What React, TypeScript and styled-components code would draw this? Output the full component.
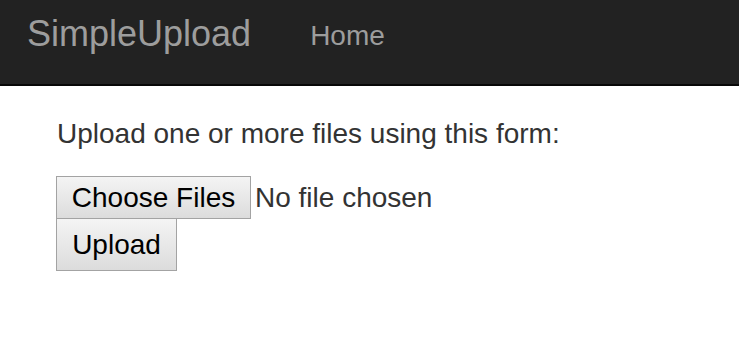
import styled, { createGlobalStyle } from "styled-components";

const GlobalStyle = createGlobalStyle`
  html, body {
    margin: 0;
    padding: 0;
    background: #ffffff;
    font-family: "Liberation Sans", Arial, Helvetica, sans-serif;
    color: #333333;
  }
`;

const Navbar = styled.nav`
  height: 84px;
  background-color: #222222;
  border-bottom: 2px solid #080808;
  display: flex;
  flex-direction: row;
  align-items: flex-start;
  padding-left: 27px;
  gap: 59px;
`;

const Brand = styled.a`
  font-size: 36px;
  line-height: 40px;
  padding-top: 14px;
  color: #9d9d9d;
  text-decoration: none;
  white-space: nowrap;
`;

const NavLink = styled.a`
  font-size: 28px;
  line-height: 40px;
  padding-top: 16px;
  color: #9d9d9d;
  text-decoration: none;
`;

const Main = styled.main`
  padding: 28px 0 0 57px;
`;

const Lead = styled.p`
  margin: 0 0 22px 0;
  font-size: 28px;
  line-height: 40px;
`;

const Form = styled.form`
  display: flex;
  flex-direction: column;
  align-items: flex-start;
`;

const FileRow = styled.div`
  display: flex;
  flex-direction: row;
  align-items: center;
  margin-left: -1px;
`;

const Button = styled.button<{ $h: number; $w: number }>`
  box-sizing: border-box;
  height: ${(p) => p.$h}px;
  width: ${(p) => p.$w}px;
  padding: 0;
  margin: 0;
  white-space: nowrap;
  font-family: "Liberation Sans", Arial, Helvetica, sans-serif;
  font-size: 28px;
  line-height: 32px;
  color: #000000;
  border: 1px solid #a3a3a3;
  border-radius: 0;
  background: linear-gradient(#f4f4f4, #dcdcdc);
  cursor: pointer;
`;

const FileStatus = styled.span`
  font-size: 28px;
  line-height: 40px;
  margin-left: 4px;
  color: #333333;
`;

const UploadButton = styled(Button)`
  margin-left: -1px;
  margin-top: -1px;
`;

export default function App() {
  return (
    <>
      <GlobalStyle />
      <Navbar>
        <Brand href="#">SimpleUpload</Brand>
        <NavLink href="#">Home</NavLink>
      </Navbar>
      <Main>
        <Lead>Upload one or more files using this form:</Lead>
        <Form onSubmit={(e) => e.preventDefault()}>
          <FileRow>
            <Button type="button" $h={43} $w={195}>
              Choose Files
            </Button>
            <FileStatus>No file chosen</FileStatus>
          </FileRow>
          <UploadButton type="submit" $h={53} $w={121}>
            Upload
          </UploadButton>
        </Form>
      </Main>
    </>
  );
}
